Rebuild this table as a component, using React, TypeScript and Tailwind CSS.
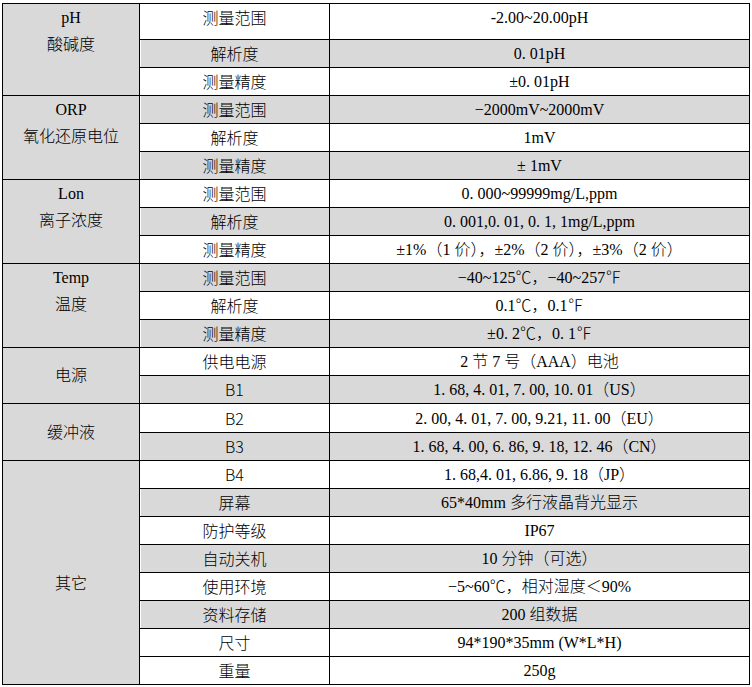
import React from "react";

type Row = { label: string; value: React.ReactNode; gray: boolean; h: number };

const rows: Row[] = [
  { label: "测量范围", value: "-2.00~20.00pH", gray: false, h: 36 },
  { label: "解析度", value: "0. 01pH", gray: true, h: 28 },
  { label: "测量精度", value: "±0. 01pH", gray: false, h: 28 },
  { label: "测量范围", value: "−2000mV~2000mV", gray: true, h: 28 },
  { label: "解析度", value: "1mV", gray: false, h: 28 },
  { label: "测量精度", value: "± 1mV", gray: true, h: 28 },
  { label: "测量范围", value: "0. 000~99999mg/L,ppm", gray: false, h: 28 },
  { label: "解析度", value: "0. 001,0. 01, 0. 1, 1mg/L,ppm", gray: true, h: 28 },
  { label: "测量精度", value: "±1%（1 价），±2%（2 价），±3%（2 价）", gray: false, h: 28 },
  { label: "测量范围", value: "−40~125℃，−40~257℉", gray: true, h: 28 },
  { label: "解析度", value: "0.1℃，0.1℉", gray: false, h: 28 },
  { label: "测量精度", value: "±0. 2℃，0. 1℉", gray: true, h: 28 },
  { label: "供电电源", value: "2 节 7 号（AAA）电池", gray: false, h: 28 },
  { label: "B1", value: "1. 68, 4. 01, 7. 00, 10. 01（US）", gray: true, h: 28 },
  { label: "B2", value: "2. 00, 4. 01, 7. 00, 9.21, 11. 00（EU）", gray: false, h: 29 },
  { label: "B3", value: "1. 68, 4. 00, 6. 86, 9. 18, 12. 46（CN）", gray: true, h: 28 },
  { label: "B4", value: "1. 68,4. 01, 6.86, 9. 18（JP）", gray: false, h: 28 },
  { label: "屏幕", value: "65*40mm 多行液晶背光显示", gray: true, h: 28 },
  { label: "防护等级", value: "IP67", gray: false, h: 28 },
  { label: "自动关机", value: "10 分钟（可选）", gray: true, h: 28 },
  { label: "使用环境", value: "−5~60℃，相对湿度＜90%", gray: false, h: 28 },
  { label: "资料存储", value: "200 组数据", gray: true, h: 28 },
  { label: "尺寸", value: "94*190*35mm (W*L*H)", gray: false, h: 28 },
  { label: "重量", value: "250g", gray: false, h: 28 },
];

type Group = { start: number; span: number; lines: string[]; top: boolean; pt: string };

const groups: Group[] = [
  { start: 0, span: 3, lines: ["pH", "酸碱度"], top: true, pt: "pt-0" },
  { start: 3, span: 3, lines: ["ORP", "氧化还原电位"], top: true, pt: "pt-0" },
  { start: 6, span: 3, lines: ["Lon", "离子浓度"], top: true, pt: "pt-0" },
  { start: 9, span: 3, lines: ["Temp", "温度"], top: true, pt: "pt-0" },
  { start: 12, span: 2, lines: ["电源"], top: false, pt: "pt-0" },
  { start: 14, span: 2, lines: ["缓冲液"], top: false, pt: "pt-0" },
  { start: 16, span: 8, lines: ["其它"], top: false, pt: "pt-[22px]" },
];

export default function App() {
  return (
    <div className="bg-white w-[752px] h-[687px] pl-[2px] pt-[3px] font-['Liberation_Serif','Noto_Sans_CJK_SC',serif] font-light text-[16px] text-black">
      <table className="border-collapse table-fixed w-[747px]">
        <colgroup>
          <col className="w-[137px]" />
          <col className="w-[190px]" />
          <col className="w-[420px]" />
        </colgroup>
        <tbody>
          {rows.map((r, i) => {
            const g = groups.find((x) => x.start === i);
            const first = i === 0;
            return (
              <tr key={i} style={{ height: r.h }}>
                {g && (
                  <td
                    rowSpan={g.span}
                    className={`border border-black bg-[#d9d9d9] text-center leading-[27px] p-0 ${g.top ? "align-top" : "align-middle"} ${g.pt}`}
                  >
                    {g.lines.map((l, k) => (
                      <div key={k}>{l}</div>
                    ))}
                  </td>
                )}
                <td
                  className={`border border-black text-center leading-[27px] p-0 shadow-[inset_1px_0_0_#fff] font-['Noto_Sans_CJK_SC','Liberation_Serif',sans-serif] ${r.gray ? "bg-[#d9d9d9]" : "bg-white"} ${first ? "align-top" : "align-middle"}`}
                >
                  {r.label}
                </td>
                <td
                  className={`border border-black text-center leading-[27px] p-0 whitespace-nowrap ${r.gray ? "bg-[#d9d9d9]" : "bg-white"} ${first ? "align-top" : "align-middle"}`}
                >
                  {r.value}
                </td>
              </tr>
            );
          })}
        </tbody>
      </table>
    </div>
  );
}
